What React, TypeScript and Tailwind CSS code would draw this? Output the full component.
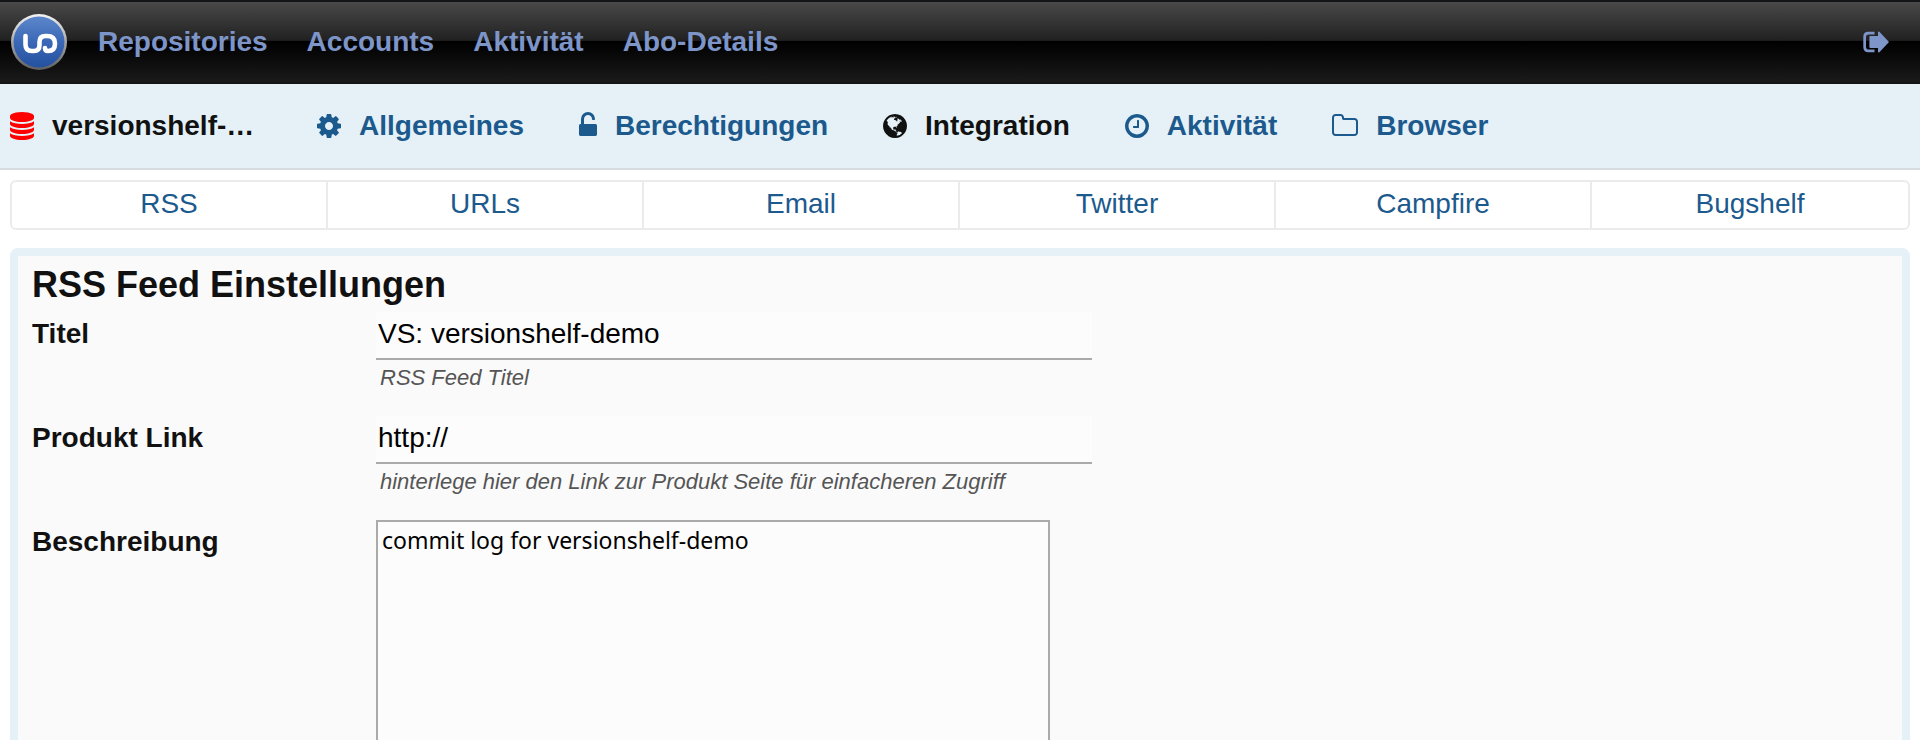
import type { ReactNode } from 'react';

interface IconProps {
  viewBox: string;
  path: string;
  className: string;
}

interface RepoTab {
  label: string;
  icon: IconProps;
  active?: boolean;
}

const icons = {
  database: {
    viewBox: '128 0 1536 1792',
    className: 'h-7 w-6',
    path: 'M896 768q237 0 443-43t325-127v170q0 69-103 128t-280 93.5-385 34.5-385-34.5-280-93.5-103-128v-170q119 84 325 127t443 43zm0 768q237 0 443-43t325-127v170q0 69-103 128t-280 93.5-385 34.5-385-34.5-280-93.5-103-128v-170q119 84 325 127t443 43zm0-384q237 0 443-43t325-127v170q0 69-103 128t-280 93.5-385 34.5-385-34.5-280-93.5-103-128v-170q119 84 325 127t443 43zm0-1152q208 0 385 34.5t280 93.5 103 128v128q0 69-103 128t-280 93.5-385 34.5-385-34.5-280-93.5-103-128v-128q0-69 103-128t280-93.5 385-34.5z',
  },
  cog: {
    viewBox: '128 0 1536 1792',
    className: 'h-7 w-6',
    path: 'M1152 896q0-106-75-181t-181-75-181 75-75 181 75 181 181 75 181-75 75-181zm512-109v222q0 12-8 23t-20 13l-185 28q-19 54-39 91 35 50 107 138 10 12 10 25t-9 23q-27 37-99 108t-94 71q-12 0-26-9l-138-108q-44 23-91 38-16 136-29 186-7 28-36 28h-222q-14 0-24.5-8.5t-11.5-21.5l-28-184q-49-16-90-37l-141 107q-10 9-25 9-14 0-25-11-126-114-165-168-7-10-7-23 0-12 8-23 15-21 51-66.5t54-70.5q-27-50-41-99l-183-27q-13-2-21-12.5t-8-23.5v-222q0-12 8-23t19-13l186-28q14-46 39-92-40-57-107-138-10-12-10-24 0-10 9-23 26-36 98.5-107.5t94.5-71.5q13 0 26 10l138 107q44-23 91-38 16-136 29-186 7-28 36-28h222q14 0 24.5 8.5t11.5 21.5l28 184q49 16 90 37l142-107q9-9 24-9 13 0 25 10 129 119 165 170 7 8 7 22 0 12-8 23-15 21-51 66.5t-54 70.5q26 50 41 98l183 28q13 2 21 12.5t8 23.5z',
  },
  unlock: {
    viewBox: '320 0 1152 1792',
    className: 'h-7 w-[18px]',
    path: 'M1376 768q40 0 68 28t28 68v576q0 40-28 68t-68 28h-960q-40 0-68-28t-28-68v-576q0-40 28-68t68-28h32v-320q0-185 131.5-316.5t316.5-131.5 316.5 131.5 131.5 316.5q0 26-19 45t-45 19h-64q-26 0-45-19t-19-45q0-106-75-181t-181-75-181 75-75 181v320h736z',
  },
  globe: {
    viewBox: '128 0 1536 1792',
    className: 'h-7 w-6',
    path: 'M896 128q209 0 385.5 103t279.5 279.5 103 385.5-103 385.5-279.5 279.5-385.5 103-385.5-103-279.5-279.5-103-385.5 103-385.5 279.5-279.5 385.5-103zm274 521q-2 1-9.5 9.5t-13.5 9.5q2 0 4.5-5t5-11 3.5-7q6-7 22-15 14-6 52-12 34-8 51 11-2-2 9.5-13t14.5-12q3-2 15-4.5t15-7.5l2-22q-12 1-17.5-7t-6.5-21q0 2-6 8 0-7-4.5-8t-11.5 1-9 1q-10-3-15-7.5t-8-16.5-4-15q-2-5-9.5-11t-9.5-10q-1-2-2.5-5.5t-3-6.5-4-5.5-5.5-2.5-7 5-7.5 10-4.5 5q-3-2-6-1.5t-4.5 1-4.5 3-5 3.5q-3 2-8.5 3t-8.5 2q15-5-1-11-10-4-16-3 9-4 7.5-12t-8.5-14h5q-1-4-8.5-8.5t-17.5-8.5-13-6q-8-5-34-9.5t-33-.5q-5 6-4.5 10.5t4 14 3.5 12.5q1 6-5.5 13t-6.5 12q0 7 14 15.5t10 21.5q-3 8-16 16t-16 12q-5 8-1.5 18.5t10.5 16.5q2 2 1.5 4t-3.5 4.5-5.5 4-6.5 3.5l-3 2q-11 5-20.5-6t-13.5-26q-7-25-16-30-23-8-29 1-5-13-41-26-25-9-58-4 6-1 0-15-7-15-19-12 3-6 4-17.5t1-13.5q3-13 12-23 1-1 7-8.5t9.5-13.5.5-6q35 4 50-11 5-5 11.5-17t10.5-17q9-6 14-5.5t14.5 5.5 14.5 5q14 1 15.5-11t-7.5-20q12 1 3-17-4-7-8-9-12-4-27 5-8 4 2 8-1-1-9.5 10.5t-16.5 17.5-16-5q-1-1-5.5-13.5t-9.5-13.5q-8 0-16 15 3-8-11-15t-24-8q19-12-8-27-7-4-20.5-5t-19.5 4q-5 7-5.5 11.5t5 8 10.5 5.5 11.5 4 8.5 3q14 10 8 14-2 1-8.5 3.5t-11.5 4.5-6 4q-3 4 0 14t-2 14q-5-5-9-17.5t-7-16.5q7 9-25 6l-10-1q-4 0-16 2t-20.5 1-13.5-8q-4-8 0-20 1-4 4-2-4-3-11-9.5t-10-8.5q-46 15-94 41 6 1 12-1 5-2 13-6.5t10-5.5q34-14 42-7l5-5q14 16 20 25-7-4-30-1-20 6-22 12 7 12 5 18-4-3-11.5-10t-14.5-11-15-5q-16 0-22 1-146 80-235 222 7 7 12 8 4 1 5 9t2.5 11 11.5-3q9 8 3 19 1-1 44 27 19 17 21 21 3 11-10 18-1-2-9-9t-9-4q-3 5 .5 18.5t10.5 12.5q-7 0-9.5 16t-2.5 35.5-1 23.5l2 1q-3 12 5.5 34.5t21.5 19.5q-13 3 20 43 6 8 8 9 3 2 12 7.5t15 10 10 10.5q4 5 10 22.5t14 23.5q-2 6 9.5 20t10.5 23q-1 0-2.5 1t-2.5 1q3 7 15.5 14t15.5 13q1 3 2 10t3 11 8 2q2-20-24-62-15-25-17-29-3-5-5.5-15.5t-4.5-14.5q2 0 6 1.5t8.5 3.5 7.5 4 2 3q-3 7 2 17.5t12 18.5 17 19 12 13q6 6 14 19.5t0 13.5q9 0 20 10.5t17 19.5q5 8 8 26t5 24q2 7 8.5 13.5t12.5 9.5l16 8 13 7q5 2 18.5 10.5t21.5 11.5q10 4 16 4t14.5-2.5 13.5-3.5q15-2 29 15t21 21q36 19 55 11-2 1 .5 7.5t8 15.5 9 14.5 5.5 8.5q5 6 18 15t18 15q6-4 7-9-3 8 7 20t18 10q14-3 14-32-31 15-49-18 0-1-2.5-5.5t-4-8.5-2.5-8.5 0-7.5 5-3q9 0 10-3.5t-2-12.5-4-13q-1-8-11-20t-12-15q-5 9-16 8t-16-9q0 1-1.5 5.5t-1.5 6.5q-13 0-15-1 1-3 2.5-17.5t3.5-22.5q1-4 5.5-12t7.5-14.5 4-12.5-4.5-9.5-17.5-2.5q-19 1-26 20-1 3-3 10.5t-5 11.5-9 7q-7 3-24 2t-24-5q-13-8-22.5-29t-9.5-37q0-10 2.5-26.5t3-25-5.5-24.5q3-2 9-9.5t10-10.5q2-1 4.5-1.5t4.5 0 4-1.5 3-6q-1-1-4-3-3-3-4-3 7 3 28.5-1.5t27.5 1.5q15 11 22-2 0-1-2.5-9.5t-.5-13.5q5 27 29 9 3 3 15.5 5t17.5 5q3 2 7 5.5t5.5 4.5 5-.5 8.5-6.5q10 14 12 24 11 40 19 44 7 3 11 2t4.5-9.5 0-14-1.5-12.5l-1-8v-18l-1-8q-15-3-18.5-12t1.5-18.5 15-18.5q1-1 8-3.5t15.5-6.5 12.5-8q21-19 15-35 7 0 11-9-1 0-5-3t-7.5-5-4.5-2q9-5 2-16 5-3 7.5-11t7.5-10q9 12 21 2 7-8 1-16 5-7 20.5-10.5t18.5-9.5q7 2 8-2t1-12 3-12q4-5 15-9t13-5l17-11q3-4 0-4 18 2 31-11 10-11-6-20 3-6-3-9.5t-15-5.5q3-1 11.5-.5t10.5-1.5q15-10-7-16-17-5-43 12zm-163 877q206-36 351-189-3-3-12.5-4.5t-12.5-3.5q-18-7-24-8 1-7-2.5-13t-8-9-12.5-8-11-7q-2-2-7-6t-7-5.5-7.5-4.5-8.5-2-10 1l-3 1q-3 1-5.5 2.5t-5.5 3-4 3 0 2.5q-21-17-36-22-5-1-11-5.5t-10.5-7-10-1.5-11.5 7q-5 5-6 15t-2 13q-7-5 0-17.5t2-18.5q-3-6-10.5-4.5t-12 4.5-11.5 8.5-9 6.5-8.5 5.5-8.5 7.5q-3 4-6 12t-5 11q-2-4-11.5-6.5t-9.5-5.5q2 10 4 35t5 38q7 31-12 48-27 25-29 40-4 22 12 26 0 7-8 20.5t-7 21.5q0 6 2 16z',
  },
  clock: {
    viewBox: '128 0 1536 1792',
    className: 'h-7 w-6',
    path: 'M1024 544v448q0 14-9 23t-23 9h-320q-14 0-23-9t-9-23v-64q0-14 9-23t23-9h224v-352q0-14 9-23t23-9h64q14 0 23 9t9 23zm416 352q0-148-73-273t-198-198-273-73-273 73-198 198-73 273 73 273 198 198 273 73 273-73 198-198 73-273zm224 0q0 209-103 385.5t-279.5 279.5-385.5 103-385.5-103-279.5-279.5-103-385.5 103-385.5 279.5-279.5 385.5-103 385.5 103 279.5 279.5 103 385.5z',
  },
  folder: {
    viewBox: '64 0 1664 1792',
    className: 'h-7 w-[26px]',
    path: 'M1600 1312v-704q0-40-28-68t-68-28h-704q-40 0-68-28t-28-68v-64q0-40-28-68t-68-28h-320q-40 0-68 28t-28 68v960q0 40 28 68t68 28h1216q40 0 68-28t28-68zm128-704v704q0 92-66 158t-158 66h-1216q-92 0-158-66t-66-158v-960q0-92 66-158t158-66h320q92 0 158 66t66 158v32h672q92 0 158 66t66 158z',
  },
  signOut: {
    viewBox: '0 0 26 28',
    className: 'h-7 w-[26px]',
    path: 'M11.5 3.7v2.7H5.8q-2.800 0-2.800 2.800v9.600q0 2.800 2.800 2.800h5.700v2.700H5.300Q0.300 24.300 0.300 19.300V8.700Q0.300 3.700 5.300 3.700zM26 14L16.400 24.300Q15 24.800 15 23.500V20H7.300Q6.400 20 6.400 19V9Q6.400 8 7.300 8H15V4.500Q15 3.200 16.400 3.700z',
  },
};

const mainNav = ['Repositories', 'Accounts', 'Aktivität', 'Abo-Details'];

const repoTabs: RepoTab[] = [
  { label: 'Allgemeines', icon: icons.cog },
  { label: 'Berechtigungen', icon: icons.unlock },
  { label: 'Integration', icon: icons.globe, active: true },
  { label: 'Aktivität', icon: icons.clock },
  { label: 'Browser', icon: icons.folder },
];

const integrations = ['RSS', 'URLs', 'Email', 'Twitter', 'Campfire', 'Bugshelf'];

function Icon({ viewBox, path, className }: IconProps) {
  return (
    <svg viewBox={viewBox} className={`shrink-0 ${className}`} fill="currentColor" aria-hidden="true">
      <path d={path} />
    </svg>
  );
}

function Logo() {
  return (
    <svg viewBox="0 0 58 58" className="h-[58px] w-[58px]" aria-hidden="true">
      <defs>
        <linearGradient id="logo-ring" x1="0" y1="0" x2="0" y2="1">
          <stop offset="0" stopColor="#f4f4f4" />
          <stop offset="0.5" stopColor="#a8a8a8" />
          <stop offset="1" stopColor="#5e5e5e" />
        </linearGradient>
        <linearGradient id="logo-fill" x1="0" y1="0" x2="0" y2="1">
          <stop offset="0" stopColor="#5c87cb" />
          <stop offset="0.5" stopColor="#3b68b6" />
          <stop offset="1" stopColor="#2450a0" />
        </linearGradient>
      </defs>
      <circle cx="29" cy="29" r="28" fill="url(#logo-ring)" />
      <circle cx="29" cy="29" r="25.500" fill="url(#logo-fill)" />
      <path
        d="M15.500 23V31.500Q15.500 38 22 38H24Q29.500 38 29.500 32V29Q29.500 23 35.500 23H37Q45 23 45 30.500Q45 38 38 38Q35 38 35 35"
        fill="none"
        stroke="#fff"
        strokeWidth="4.600"
        strokeLinecap="round"
        strokeLinejoin="round"
      />
    </svg>
  );
}

interface FieldProps {
  id: string;
  label: string;
  hint?: string;
  children: ReactNode;
}

function Field({ id, label, hint, children }: FieldProps) {
  return (
    <div className="flex">
      <label htmlFor={id} className="w-[344px] shrink-0 pt-1.5 font-bold leading-8">
        {label}
      </label>
      <div className="grow">
        {children}
        {hint && <p className="px-1 pt-1 text-[22px] italic leading-7 text-[#555]">{hint}</p>}
      </div>
    </div>
  );
}

export default function App() {
  return (
    <div className="h-screen overflow-hidden bg-white font-['Liberation_Sans',Arial,sans-serif] text-[28px] leading-8 text-[#111]">
      {/* Main navigation */}
      <header className="flex h-21 items-center border-y-2 border-[#141517] bg-[linear-gradient(#494949_0%,#212121_48%,#000_49%,#1a1a1a_100%)] pl-2.5 pr-[31px] font-bold text-[#7d95c8]">
        <a href="#home" aria-label="Versionshelf">
          <Logo />
        </a>
        <nav className="ml-[30px] flex grow gap-[39px]">
          {mainNav.map((item) => (
            <a key={item} href="#nav">{item}</a>
          ))}
        </nav>
        <a href="#logout" aria-label="Abmelden">
          <Icon {...icons.signOut} />
        </a>
      </header>

      {/* Repository navigation */}
      <nav className="flex h-[86px] items-center gap-[55px] border-b-2 border-[#d8dcde] bg-[#e5f1f7] px-2.5 font-bold text-[#1c5a8e]">
        <a href="#repo" className="flex items-center gap-[18px] text-[#111]">
          <span className="text-[#f00]">
            <Icon {...icons.database} />
          </span>
          <span className="w-[210px] truncate">versionshelf-…</span>
        </a>
        {repoTabs.map((tab) => (
          <a
            key={tab.label}
            href="#tab"
            className={`flex items-center gap-[18px] ${tab.active ? 'text-[#111]' : ''}`}
          >
            <Icon {...tab.icon} />
            {tab.label}
          </a>
        ))}
      </nav>

      <main className="px-2.5 pt-2.5">
        {/* Integration tabs */}
        <nav className="grid grid-cols-6 divide-x-2 divide-[#ebebeb] rounded-md border-2 border-[#ebebeb] text-center text-[#1c5a8e]">
          {integrations.map((item) => (
            <a key={item} href="#integration" className="pb-2 pt-1.5">{item}</a>
          ))}
        </nav>

        <section className="mt-[18px] rounded-lg border-8 border-[#e5f1f7] bg-[#fafafa] px-3.5 pb-8 pt-1.5">
          <h1 className="pb-1 text-4xl font-bold leading-[46px]">RSS Feed Einstellungen</h1>
          <form className="flex flex-col gap-6">
            <Field id="title" label="Titel" hint="RSS Feed Titel">
              <input
                id="title"
                type="text"
                defaultValue="VS: versionshelf-demo"
                className="block h-12 w-[716px] border-b-2 border-[#aaa] bg-[#fcfcfc] px-0.5 pb-0.5 text-black outline-none"
              />
            </Field>
            <Field
              id="link"
              label="Produkt Link"
              hint="hinterlege hier den Link zur Produkt Seite für einfacheren Zugriff"
            >
              <input
                id="link"
                type="text"
                defaultValue="http://"
                className="block h-12 w-[716px] border-b-2 border-[#aaa] bg-[#fcfcfc] px-0.5 pb-0.5 text-black outline-none"
              />
            </Field>
            <Field id="description" label="Beschreibung">
              <textarea
                id="description"
                defaultValue="commit log for versionshelf-demo"
                className="block h-80 w-[674px] resize-none border-2 border-[#aaa] bg-[#fcfcfc] px-1 py-0.5 font-['Noto_Sans',sans-serif] text-[23px] leading-8 text-black outline-none"
              />
            </Field>
          </form>
        </section>
      </main>
    </div>
  );
}
